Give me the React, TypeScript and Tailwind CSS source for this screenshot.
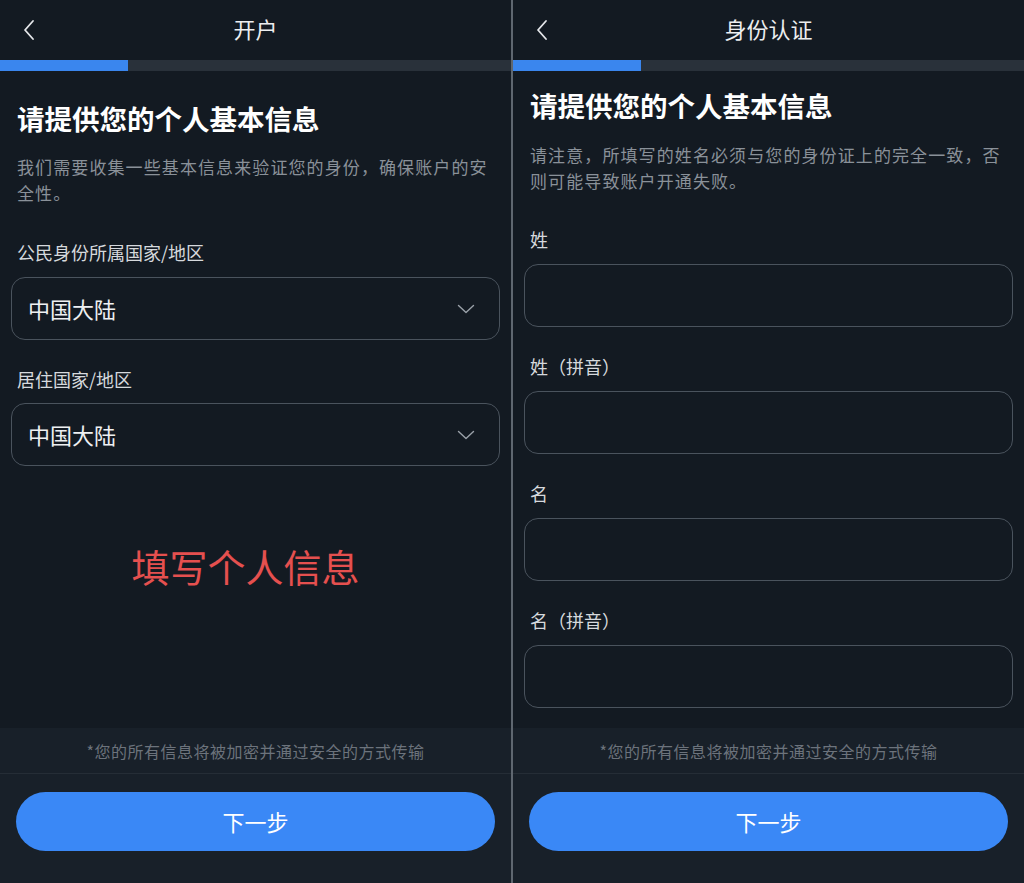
import React from "react"

const FONT = { fontFamily: '"Noto Sans CJK SC", "Noto Sans", sans-serif' }

function BackIcon() {
  return (
    <svg width="14" height="22" viewBox="0 0 14 22" fill="none">
      <path d="M11 2 L3 11 L11 20" stroke="#e5e7ea" strokeWidth="1.8" strokeLinecap="round" strokeLinejoin="round" />
    </svg>
  )
}

function ChevronDown() {
  return (
    <svg width="18" height="10" viewBox="0 0 18 10" fill="none">
      <path d="M1.5 1.5 L9 8.5 L16.5 1.5" stroke="#9aa1a9" strokeWidth="1.4" strokeLinecap="round" strokeLinejoin="round" />
    </svg>
  )
}

function Header({ title }: { title: string }) {
  return (
    <>
      <div className="relative h-[60px] flex items-center justify-center pb-[5px]">
        <div className="absolute left-[22px] top-[19px]">
          <BackIcon />
        </div>
        <span className="text-[22px] leading-[30px] text-[#eceef0]">{title}</span>
      </div>
      <div className="h-[11px] bg-[#29313a] flex">
        <div className="w-[128px] bg-[#3a86ee]" />
      </div>
    </>
  )
}

function Footer() {
  return (
    <div className="bg-[#182029]">
      <div className="h-[46px] flex items-center justify-center border-b border-[#252d36]">
        <span className="text-[16px] tracking-[0.5px] text-[#6c737c]">*您的所有信息将被加密并通过安全的方式传输</span>
      </div>
      <div className="pt-[18px] pb-[32px] px-[16px]">
        <button className="w-full h-[59px] rounded-full bg-[#3a88f6] text-white text-[22px]">下一步</button>
      </div>
    </div>
  )
}

function SelectBox({ value }: { value: string }) {
  return (
    <div className="h-[63px] rounded-[14px] border border-[#4a535d] flex items-center justify-between pl-[16px] pr-[24px]">
      <span className="text-[22px] text-[#eef0f2]">{value}</span>
      <ChevronDown />
    </div>
  )
}

function InputField({ label, first }: { label: string; first?: boolean }) {
  return (
    <div className={first ? "mt-[33px]" : "mt-[27px]"}>
      <p className="pl-[6px] text-[18px] leading-[24px] text-[#d6d9dd]">{label}</p>
      <div className="mt-[13px] h-[63px] rounded-[14px] border border-[#4a535d]" />
    </div>
  )
}

function OpenAccount() {
  return (
    <div className="w-[511px] h-[883px] flex flex-col bg-[#131a22]">
      <Header title="开户" />
      <div className="flex-1 px-[11px]">
        <h1 className="mt-[29px] pl-[6px] text-[27.5px] leading-[36px] font-bold text-white">请提供您的个人基本信息</h1>
        <p className="mt-[18px] pl-[6px] pr-[4px] text-[17px] tracking-[1.1px] leading-[26px] text-[#8a9199]">
          我们需要收集一些基本信息来验证您的身份，确保账户的安全性。
        </p>
        <p className="mt-[34px] pl-[6px] text-[18px] leading-[24px] text-[#d6d9dd]">公民身份所属国家/地区</p>
        <div className="mt-[13px]">
          <SelectBox value="中国大陆" />
        </div>
        <p className="mt-[27px] pl-[6px] text-[18px] leading-[24px] text-[#d6d9dd]">居住国家/地区</p>
        <div className="mt-[12px]">
          <SelectBox value="中国大陆" />
        </div>
        <p className="mt-[75px] text-center pr-[20px] text-[38px] leading-[50px] text-[#e5504f]">填写个人信息</p>
      </div>
      <Footer />
    </div>
  )
}

function IdVerify() {
  return (
    <div className="w-[511px] h-[883px] flex flex-col bg-[#131a22]">
      <Header title="身份认证" />
      <div className="flex-1 px-[11px]">
        <h1 className="mt-[16px] pl-[6px] text-[27.5px] leading-[36px] font-bold text-white">请提供您的个人基本信息</h1>
        <p className="mt-[19px] pl-[6px] pr-[4px] text-[17px] tracking-[1.1px] leading-[26px] text-[#8a9199]">
          请注意，所填写的姓名必须与您的身份证上的完全一致，否则可能导致账户开通失败。
        </p>
        <InputField label="姓" first />
        <InputField label="姓（拼音）" />
        <InputField label="名" />
        <InputField label="名（拼音）" />
      </div>
      <Footer />
    </div>
  )
}

export default function App() {
  return (
    <div className="w-[1024px] h-[883px] flex overflow-hidden bg-[#131a22]" style={FONT}>
      <OpenAccount />
      <div className="w-[2px] bg-[#5f6770]" />
      <IdVerify />
    </div>
  )
}
